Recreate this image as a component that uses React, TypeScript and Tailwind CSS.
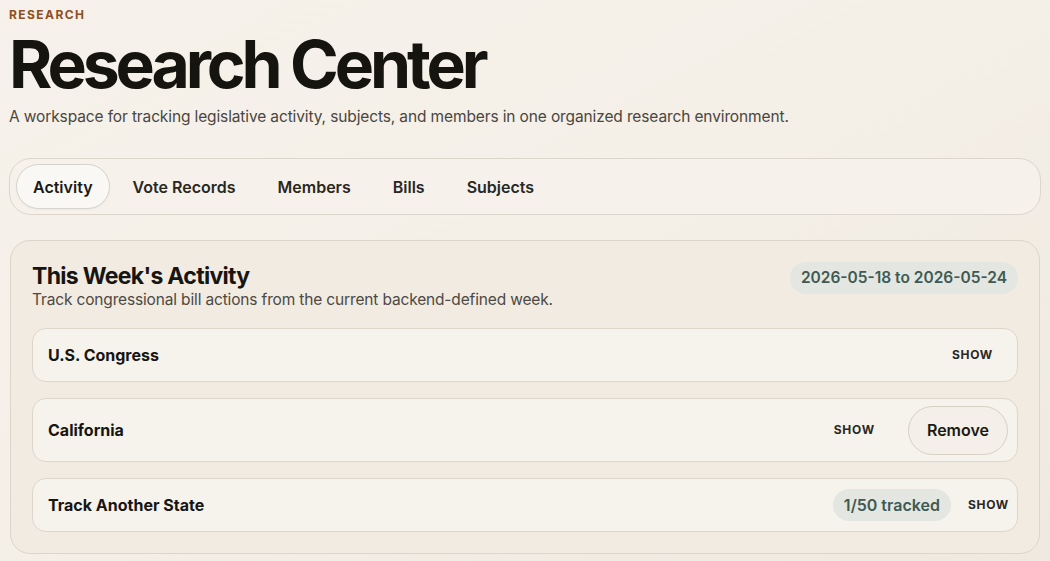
import React from "react";

const tabs = ["Activity", "Vote Records", "Members", "Bills", "Subjects"];

function ShowButton() {
  return (
    <button className="text-[12px] font-bold tracking-[0.06em] text-[#2b2824]">
      SHOW
    </button>
  );
}

export default function App() {
  return (
    <div
      className="min-h-[561px] w-full bg-gradient-to-br from-[#f6f2eb] via-[#f4efe7] to-[#efe9df] text-[#171511]"
      style={{ fontFamily: "Inter, 'Noto Sans', sans-serif" }}
    >
      <div className="px-[9px] pt-[6px]">
        <div className="text-[12px] font-bold tracking-[0.12em] text-[#8f4f22]">RESEARCH</div>
        <h1 className="mt-[4px] text-[66px] font-bold leading-[72px] tracking-[-0.062em] text-[#16140f]">
          Research Center
        </h1>
        <p className="mt-[6px] text-[15.5px] leading-[22px] tracking-[-0.008em] text-[#4a4640]">
          A workspace for tracking legislative activity, subjects, and members in one organized research environment.
        </p>

        <nav className="mt-[30px] flex items-center gap-[4px] rounded-[22px] border border-[#dcd6cc] bg-[#f6f2eb] px-[6px] py-[5px]">
          {tabs.map((t, i) => (
            <button
              key={t}
              className={
                i === 0
                  ? "h-[45px] rounded-full border border-[#d6d3cc] bg-[#faf8f4] px-[16px] text-[16px] font-semibold text-[#1b1915] shadow-[0_1px_2px_rgba(0,0,0,0.04)]"
                  : "h-[45px] rounded-full px-[19px] text-[16px] font-semibold text-[#2a2722]"
              }
            >
              {t}
            </button>
          ))}
        </nav>

        <section className="mt-[25px] ml-[1px] mr-[1px] rounded-[20px] border border-[#dcd5c9] bg-[#f1ebe1] px-[21px] pt-[21px] pb-[21px]">
          <div className="flex items-start justify-between">
            <div>
              <h2 className="text-[23px] font-bold leading-[28px] tracking-[-0.03em] text-[#171511]">
                This Week's Activity
              </h2>
              <p className="text-[15.5px] leading-[20px] tracking-[-0.01em] text-[#4d4943]">
                Track congressional bill actions from the current backend-defined week.
              </p>
            </div>
            <span className="flex h-[32px] items-center rounded-full bg-[#e4e6e2] px-[11px] text-[15.5px] font-semibold text-[#3e5a52]">
              2026-05-18 to 2026-05-24
            </span>
          </div>

          <div className="mt-[18px] flex flex-col gap-[16px]">
            <div className="flex h-[54px] items-center justify-between rounded-[14px] border border-[#ddd6cb] bg-[#f6f2ec] pl-[15px] pr-[24px]">
              <span className="text-[16px] font-bold text-[#171511]">U.S. Congress</span>
              <ShowButton />
            </div>

            <div className="flex h-[64px] items-center justify-between rounded-[14px] border border-[#ddd6cb] bg-[#f6f2ec] pl-[15px] pr-[9px]">
              <span className="text-[16px] font-bold text-[#171511]">California</span>
              <div className="flex items-center gap-[33px]">
                <ShowButton />
                <button className="h-[49px] rounded-full border border-[#d6d0c5] bg-[#f4f0e9] px-[18px] text-[16px] font-semibold text-[#1b1915]">
                  Remove
                </button>
              </div>
            </div>

            <div className="flex h-[54px] items-center justify-between rounded-[14px] border border-[#ddd6cb] bg-[#f6f2ec] pl-[15px] pr-[8px]">
              <span className="text-[16px] font-bold text-[#171511]">Track Another State</span>
              <div className="flex items-center gap-[17px]">
                <span className="flex h-[32px] items-center rounded-full bg-[#e4e6e2] px-[11px] text-[16px] font-semibold text-[#3e5a52]">
                  1/50 tracked
                </span>
                <ShowButton />
              </div>
            </div>
          </div>
        </section>
      </div>
    </div>
  );
}
